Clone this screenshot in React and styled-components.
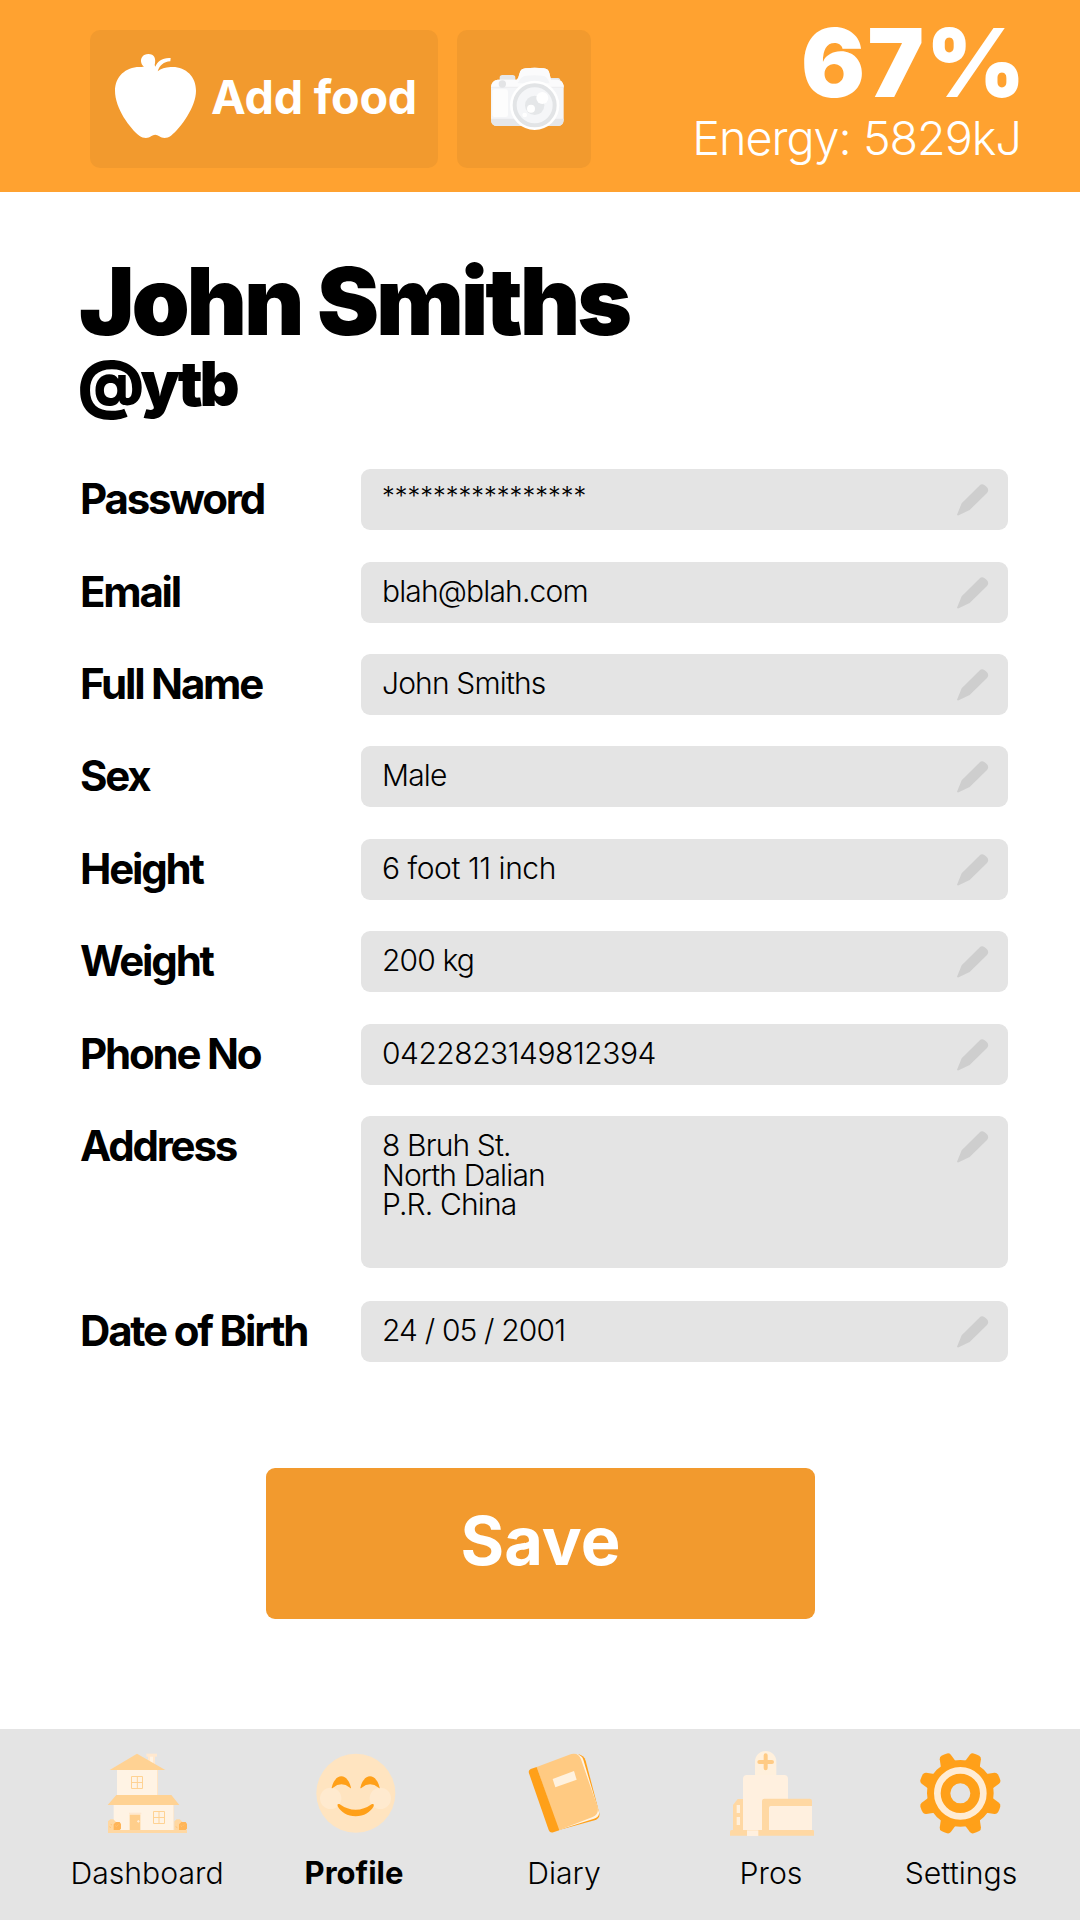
import React from 'react';
import styled, { createGlobalStyle } from 'styled-components';

const GlobalStyle = createGlobalStyle`
  *, *::before, *::after { box-sizing: border-box; }
  body { margin: 0; background: #fff; color: #000; font-family: Inter, "Liberation Sans", sans-serif; }
  h1, h2, p { margin: 0; font-weight: inherit; }
  button { border: 0; padding: 0; font: inherit; color: inherit; background: none; }
  svg { display: block; flex: none; }
`;

const Screen = styled.div`
  display: flex;
  flex-direction: column;
  width: 1080px;
  height: 1920px;
  overflow: hidden;
  background: #fff;
`;

const Header = styled.header`
  display: flex;
  align-items: flex-start;
  height: 192px;
  padding: 0 59px 0 90px;
  background: #ffa230;
  color: #fff;
`;

const HeaderButton = styled.button`
  display: flex;
  align-items: center;
  width: ${(p) => p.$width}px;
  height: 138px;
  margin: 30px 19px 0 0;
  border-radius: 10px;
  background: #f29a2e;
`;

const AddButton = styled(HeaderButton)`
  gap: 15px;
  padding: 0 0 4px 25px;
  font-size: 46.7px;
  font-weight: 700;
  line-height: 56px;
  letter-spacing: -0.25px;
  white-space: nowrap;
`;

const Stats = styled.div`
  display: flex;
  flex-direction: column;
  align-items: flex-end;
  margin-left: auto;
  padding-top: 16px;
`;

const Percent = styled.p`
  margin-right: -6.5px;
  font-size: 95px;
  font-weight: 900;
  line-height: 94px;
  letter-spacing: 2.2px;
`;

const Energy = styled.p`
  font-size: 46.7px;
  font-weight: 300;
  line-height: 56px;
  letter-spacing: -1px;
  white-space: nowrap;
`;

const Main = styled.main`
  display: flex;
  flex-direction: column;
  flex: 1;
  padding: 63px 72px 0 79px;
`;

const Name = styled.h1`
  font-size: 93.3px;
  font-weight: 900;
  line-height: 94px;
  letter-spacing: -3.15px;
  white-space: nowrap;
`;

const Handle = styled.h2`
  margin: 3px 0 0 -1px;
  font-size: 62.2px;
  font-weight: 900;
  line-height: 64px;
  letter-spacing: -3.4px;
`;

const Form = styled.form`
  display: flex;
  flex-direction: column;
  gap: 31.45px;
  margin-top: 53.15px;
`;

const FormRow = styled.div`
  display: grid;
  grid-template-columns: 282px 647px;
  margin-bottom: ${(p) => (p.$tall ? 1.3 : 0)}px;
`;

const Label = styled.label`
  padding-left: 1px;
  font-size: 42px;
  font-weight: 700;
  line-height: 60px;
  letter-spacing: -2.2px;
  white-space: nowrap;
`;

const Field = styled.div`
  display: flex;
  align-items: flex-start;
  justify-content: space-between;
  height: ${(p) => (p.$tall ? 152 : 61)}px;
  padding: 15px 19px 0 21px;
  border-radius: 9px;
  background: #e4e4e4;
`;

const Value = styled.span`
  font-size: 30px;
  font-weight: 300;
  line-height: 29.4px;
  letter-spacing: ${(p) => p.$spacing ?? -0.85}px;
  white-space: pre-line;
`;

const MaskedValue = styled(Value)`
  margin-top: -3px;
  font-size: 25.5px;
  letter-spacing: 0;
`;

const SaveButton = styled.button`
  align-self: flex-start;
  width: 549px;
  height: 151px;
  margin: 106px 0 0 187px;
  padding-bottom: 5px;
  border-radius: 9px;
  background: #f29a2e;
  color: #fff;
  font-size: 66.7px;
  font-weight: 700;
  line-height: 80px;
`;

const Nav = styled.nav`
  display: grid;
  grid-template-columns: 206px 208px 212px 202px 178px;
  height: 191px;
  padding: 21px 0 0 44px;
  background: #e4e4e4;
`;

const NavItem = styled.div`
  display: flex;
  flex-direction: column;
  align-items: center;
  gap: 17px;
  font-size: ${(p) => (p.$active ? 31 : 30.2)}px;
  font-weight: ${(p) => (p.$active ? 700 : 300)};
  line-height: 40px;
`;

const Apple = () => (
  <svg width="81" height="86" viewBox="105 102 243 258" fill="#fff">
    <path d="M226 150 C216 140 196 139 184 141 C140 138 105 168 105 212 C105 265 150 325 178 347 C190 356 205 355 213 349 C221 343 230 343 238 349 C248 356 262 355 273 347 C303 323 348 260 348 212 C348 168 315 138 272 141 C255 142 243 145 233 154 C240 135 250 126 271 124 L272 114 C248 112 232 124 226 140 L224 135 C229 116 223 102 205 102 C189 102 180 114 184 129 C187 140 198 143 206 148 Z" />
  </svg>
);

const Camera = () => (
  <svg width="134" height="138" viewBox="291 30 402 414">
    <path d="M419 180 v-7 q0 -8 8 -8 h31 q8 0 8 8 v7z M571 184 v-10 h24 q5 0 7 8z" fill="#e6e7e9" />
    <path d="M393 200 q2 -18 20 -21 h57 q5 -2 6 -10 l3 -10 q3 -13 18 -14 q27 -3 54 0 q14 1 17 14 l5 20 h20 q15 2 18 18 v100 q0 21 -18 21 h-182 q-18 0 -18 -20z" fill="#f4f5f7" />
    <path d="M393 200 q2 -18 20 -21 h57 q5 -2 6 -10 l3 -10 q3 -13 18 -14 q27 -3 54 0 q14 1 17 14 l5 20 h20 q15 2 18 18 v5 h-218z" fill="#fbfbfc" />
    <path d="M473 190 q10 -22 25 -23 q26 -3 50 0 q13 1 21 23z" fill="#f4f5f7" />
    <path d="M393 202 h218" stroke="#e9eaec" strokeWidth="2" />
    <path d="M393 296 h218 v4 q-1 18 -18 18 h-182 q-17 0 -18 -18z" fill="#e6e7e9" />
    <rect x="397" y="208" width="47" height="83" rx="7" fill="#fdfdfd" />
    <circle cx="427" cy="192" r="11" fill="#e3e4e6" />
    <circle cx="524" cy="256" r="74" fill="#fff" />
    <circle cx="524" cy="256" r="60" fill="#f5f6f8" stroke="#e2e4e6" strokeWidth="12" />
    <circle cx="524" cy="256" r="29" fill="#e5e7e9" />
    <circle cx="547" cy="234" r="18" fill="#fff" />
    <circle cx="513" cy="266" r="12" fill="#fff" />
    <circle cx="494" cy="285" r="7" fill="#fff" />
  </svg>
);

const Pencil = () => (
  <svg width="32" height="32" viewBox="173 87 96 96" fill="#cecece">
    <path d="M173 179 L187 145 L240 92 Q249 83 259 93 Q272 103 263 114 L211 165 L178 181 Q174 182 173 179Z" />
  </svg>
);

const House = () => (
  <svg width="86" height="86" viewBox="132 90 258 258">
    <rect x="264" y="108" width="21" height="34" fill="#fff3e4" />
    <rect x="264" y="108" width="6" height="30" fill="#ffe8cf" />
    <rect x="279" y="108" width="6" height="30" fill="#ffe8cf" />
    <rect x="259" y="101" width="32" height="9" fill="#ffe8cf" />
    <rect x="171" y="149" width="120" height="77" fill="#fff3e4" />
    <rect x="291" y="149" width="3" height="77" fill="#ffe5c6" />
    <path d="M149 150 L231 101 L316 150Z M143 255 L169 225 H334 L358 255Z" fill="#ffd293" />
    <rect x="161" y="255" width="180" height="75" fill="#fff3e4" />
    <path d="M341 255 v75" stroke="#ffe5c6" strokeWidth="2" />
    <g fill="none" stroke="#ffd293" strokeWidth="3">
      <path d="M214.500 169.500 h33 v36 h-33z M232 170 v36 M214 187.500 h34" />
      <path d="M280.500 274.500 h33 v36 h-33z M297 275 v36 M280 292.500 h34" />
    </g>
    <rect x="207" y="278" width="37" height="5" fill="#ffe8cf" />
    <rect x="209" y="284" width="32" height="46" fill="#ffce8b" />
    <path d="M235 300 v8 M231 304 h8" stroke="#ffeedb" strokeWidth="3" />
    <path d="M144 330 v-26 l7 -6 h9 l8 8 v24z M343 330 v-26 l7 -6 h9 l8 8 v24z" fill="#ffd7a0" />
    <path d="M161 330 v-17 l7 -7 h11 l4 6 v14 l-4 4z M357 330 v-17 l7 -7 h13 l4 6 v14 l-4 4z" fill="#ffb558" />
    <path d="M148 320 l5 3 M156 315 l-4 -2 M166 317 l4 3 M175 314 l-3 3 M347 320 l5 3 M362 317 l4 3 M372 314 l-3 3" stroke="#ffc57a" strokeWidth="3" />
    <rect x="144" y="330" width="237" height="9" fill="#ffd8a3" />
  </svg>
);

const Smile = () => (
  <svg width="86" height="86" viewBox="93 90 258 258">
    <circle cx="227.500" cy="220" r="118.500" fill="#ffe4c0" />
    <circle cx="152" cy="235" r="32" fill="#ffeacf" />
    <circle cx="301" cy="235" r="32" fill="#ffeacf" />
    <g fill="#ffa019">
      <path d="M155 203 C160 182 171 169 184 169 C197 169 208 182 213 203 Q214 206 210 203 Q184 183 159 203 Q155 206 155 203Z" />
      <path d="M241 203 C246 182 257 169 270 169 C283 169 294 182 299 203 Q300 206 296 203 Q270 183 245 203 Q241 206 241 203Z" />
      <path d="M178 252 Q227 287 276 252 Q284 250 281 259 C271 277 252 289 227 289 C202 289 183 277 173 259 Q170 250 178 252Z" />
    </g>
  </svg>
);

const Book = () => (
  <svg width="86" height="86" viewBox="63 90 258 258">
    <path d="M236 103 Q252 107 257 122 L298 280 Q301 295 284 301 L180 329Z" fill="#ffa019" />
    <path d="M228 102 Q246 105 250 119 L297 277 Q299 291 282 296 L178 329Z" fill="#fff3e2" />
    <path d="M110 141 L214 102 Q236 97 243 118 L293 262 Q297 283 278 291 L176 331Z" fill="#ffca82" />
    <path d="M110 141 L92 147 Q84 151 87 160 L146 330 Q150 340 160 337 L178 331Z" fill="#ffa019" />
    <path d="M158 177 L222 153 L230 179 L166 202Z" fill="#fff2df" />
  </svg>
);

const Hospital = () => (
  <svg width="86" height="86" viewBox="84 90 258 258">
    <path d="M99 331 V255 L113 237 H130 V331Z" fill="#ffd8a3" />
    <rect x="110" y="255" width="10" height="24" fill="#fff0dc" />
    <rect x="110" y="291" width="10" height="24" fill="#fff0dc" />
    <path d="M165 168 V125 A32 32 0 0 1 229 125 V168Z" fill="#fff0dc" />
    <path d="M129 331 V177 Q129 165 141 165 H252 Q264 165 264 177 V331Z" fill="#fff0df" />
    <path d="M197 106 V145 M178 126 H216" stroke="#ffcb85" strokeWidth="12" strokeLinecap="round" />
    <path d="M186 331 V243 Q186 236 193 236 H329 Q336 236 336 243 V331Z" fill="#ffd8a3" />
    <path d="M207 331 V263 Q207 258 212 258 H336 V331Z" fill="#fff0df" />
    <path d="M90 347 V335 Q90 330 95 330 H338 Q343 330 343 335 V347Z" fill="#ffd8a3" />
    <path d="M141 348 V331 H175 V348Z" fill="#fff0df" />
  </svg>
);

const Gear = () => (
  <svg width="86" height="86" viewBox="114 90 258 258">
    <g transform="translate(241 220)" fill="#ffa019">
      {[22.5, 67.5, 112.5, 157.5, 202.5, 247.5, 292.5, 337.5].map((a) => (
        <path key={a} transform={`rotate(${a})`} d="M-25 -90 L-18 -118 Q-16 -125 -9 -126 Q0 -127 9 -126 Q16 -125 18 -118 L25 -90Z" />
      ))}
      <circle r="65" fill="none" stroke="#ffa019" strokeWidth="70" />
      <circle r="69" fill="none" stroke="#ffecd4" strokeWidth="20" />
    </g>
  </svg>
);

const fields = [
  { label: 'Password', value: '****************', masked: true },
  { label: 'Email', value: 'blah@blah.com' },
  { label: 'Full Name', value: 'John Smiths' },
  { label: 'Sex', value: 'Male' },
  { label: 'Height', value: '6 foot 11 inch', spacing: -0.45 },
  { label: 'Weight', value: '200 kg' },
  { label: 'Phone No', value: '0422823149812394', spacing: -0.48 },
  { label: 'Address', value: '8 Bruh St.\nNorth Dalian\nP.R. China', tall: true },
  { label: 'Date of Birth', value: '24 / 05 / 2001' },
];

const tabs = [
  { name: 'Dashboard', Icon: House },
  { name: 'Profile', Icon: Smile, active: true },
  { name: 'Diary', Icon: Book },
  { name: 'Pros', Icon: Hospital },
  { name: 'Settings', Icon: Gear },
];

export default function App() {
  return (
    <Screen>
      <GlobalStyle />
      <Header>
        <AddButton $width={348}>
          <Apple />
          Add food
        </AddButton>
        <HeaderButton $width={134} aria-label="Camera">
          <Camera />
        </HeaderButton>
        <Stats>
          <Percent>67%</Percent>
          <Energy>Energy: 5829kJ</Energy>
        </Stats>
      </Header>
      <Main>
        <Name>John Smiths</Name>
        <Handle>@ytb</Handle>
        <Form>
          {fields.map((f) => (
            <FormRow key={f.label} $tall={f.tall}>
              <Label>{f.label}</Label>
              <Field $tall={f.tall}>
                {f.masked ? (
                  <MaskedValue>{f.value}</MaskedValue>
                ) : (
                  <Value $spacing={f.spacing}>{f.value}</Value>
                )}
                <Pencil />
              </Field>
            </FormRow>
          ))}
        </Form>
        <SaveButton>Save</SaveButton>
      </Main>
      <Nav>
        {tabs.map(({ name, Icon, active }) => (
          <NavItem key={name} $active={active}>
            <Icon />
            {name}
          </NavItem>
        ))}
      </Nav>
    </Screen>
  );
}
